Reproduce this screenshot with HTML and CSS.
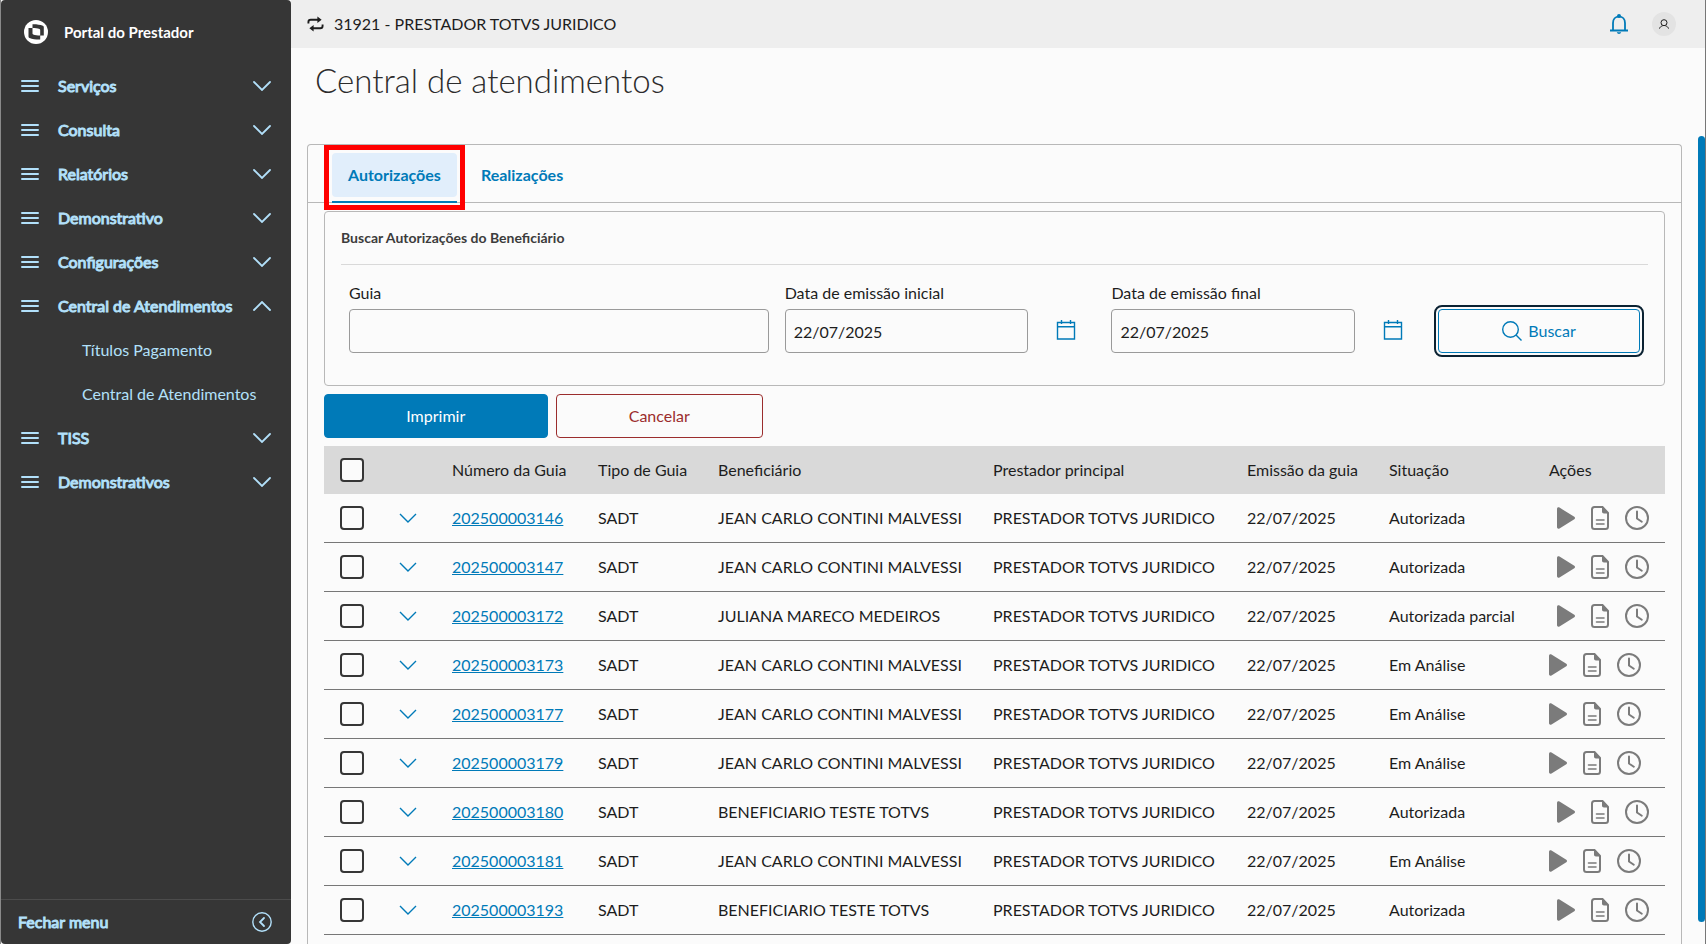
FILE: index.html
```html
<!DOCTYPE html>
<html lang="pt-BR">
<head>
  <meta charset="UTF-8">
  <meta name="viewport" content="width=device-width, initial-scale=1">
  <title>Portal do Prestador</title>
  <link rel="stylesheet" href="styles.css">
</head>
<body>
  <!-- Icons -->
  <svg class="sprite" aria-hidden="true">
    <symbol id="i-menu" viewBox="0 0 18 14"><path d="M1 2h16M1 7h16M1 12h16" fill="none" stroke="currentColor" stroke-width="2" stroke-linecap="round"/></symbol>
    <symbol id="i-down" viewBox="0 0 18 10"><path d="M1 1l8 8 8-8" fill="none" stroke="currentColor" stroke-width="1.8" stroke-linecap="round"/></symbol>
    <symbol id="i-up" viewBox="0 0 18 10"><path d="M1 9l8-8 8 8" fill="none" stroke="currentColor" stroke-width="1.8" stroke-linecap="round"/></symbol>
    <symbol id="i-expand" viewBox="0 0 18 10"><path d="M1 1l8 8 8-8" fill="none" stroke="currentColor" stroke-width="1.4"/></symbol>
    <symbol id="i-calendar" viewBox="0 0 20 20"><path d="M1.5 2.5h17v16.5h-17zM1.5 6.7h17M5.5 0v4M14.5 0v4" fill="none" stroke="currentColor" stroke-width="1.4"/></symbol>
    <symbol id="i-play" viewBox="0 0 18 24"><path d="M0 3c0-1.600 1.300-2.100 2.500-1.400l14.800 9.200c1 .6 1 1.800 0 2.400L2.500 22.400C1.300 23.100 0 22.600 0 21z" fill="currentColor"/></symbol>
    <symbol id="i-file" viewBox="0 0 18 24"><path d="M11.500 1H3.500C2 1 1 2 1 3.500v17C1 22 2 23 3.500 23h11c1.500 0 2.500-1 2.500-2.500V7z" fill="none" stroke="currentColor" stroke-width="2"/><path d="M11 0.500L17.500 7.500H13c-1.300 0-2-.7-2-2z" fill="currentColor"/><path d="M5.500 14h7.500M5.500 18h7.500" stroke="currentColor" stroke-width="1.600" stroke-linecap="round"/></symbol>
    <symbol id="i-clock" viewBox="0 0 24 24"><circle cx="12" cy="12" r="11" fill="none" stroke="currentColor" stroke-width="2"/><path d="M12 5.500V12.500L16.800 15.800" fill="none" stroke="currentColor" stroke-width="2" stroke-linecap="round" stroke-linejoin="round"/></symbol>
  </svg>

  <!-- Sidebar -->
  <aside class="sidebar">
    <div class="brand">
      <svg class="logo" viewBox="0 0 24 24"><circle cx="12" cy="12" r="12" fill="#fff"/><path d="M8.500 4.200c4-.1 7.500.4 10.300 1.500.7.300 1 .8 1 1.500v8.400h-3.600v4c-4 .1-7.600-.4-10.700-1.600-.7-.3-1-.8-1-1.500V8h4z" fill="#363636"/><path d="M8.500 8c2.700 0 5 .3 7 1.100.5.200.7.5.7 1v5.400c-2.700 0-5-.3-7-1.100-.5-.2-.7-.5-.7-1z" fill="#fff"/></svg>
      <span>Portal do Prestador</span>
    </div>
    <nav class="menu">
      <button class="menu-item"><svg class="burger"><use href="#i-menu"/></svg><span>Serviços</span><svg class="chevron"><use href="#i-down"/></svg></button>
      <button class="menu-item"><svg class="burger"><use href="#i-menu"/></svg><span>Consulta</span><svg class="chevron"><use href="#i-down"/></svg></button>
      <button class="menu-item"><svg class="burger"><use href="#i-menu"/></svg><span>Relatórios</span><svg class="chevron"><use href="#i-down"/></svg></button>
      <button class="menu-item"><svg class="burger"><use href="#i-menu"/></svg><span>Demonstrativo</span><svg class="chevron"><use href="#i-down"/></svg></button>
      <button class="menu-item"><svg class="burger"><use href="#i-menu"/></svg><span>Configurações</span><svg class="chevron"><use href="#i-down"/></svg></button>
      <button class="menu-item" aria-expanded="true"><svg class="burger"><use href="#i-menu"/></svg><span>Central de Atendimentos</span><svg class="chevron"><use href="#i-up"/></svg></button>
      <a class="submenu-item" href="#">Títulos Pagamento</a>
      <a class="submenu-item" href="#">Central de Atendimentos</a>
      <button class="menu-item"><svg class="burger"><use href="#i-menu"/></svg><span>TISS</span><svg class="chevron"><use href="#i-down"/></svg></button>
      <button class="menu-item"><svg class="burger"><use href="#i-menu"/></svg><span>Demonstrativos</span><svg class="chevron"><use href="#i-down"/></svg></button>
    </nav>
    <button class="close-menu">
      <span>Fechar menu</span>
      <svg class="close-icon" viewBox="0 0 20 20" fill="none" stroke="currentColor"><circle cx="10" cy="10" r="9.200" stroke-width="1.400"/><path d="M12 6l-4 4 4 4" stroke-width="1.800" stroke-linecap="round"/></svg>
    </button>
  </aside>

  <div class="page">
    <header class="topbar">
      <a class="provider" href="#">
        <svg class="swap" viewBox="0 0 18 16" fill="none" stroke="currentColor" stroke-width="2"><path d="M1.500 7.500V6c0-1.700.8-2.500 2.500-2.500h8M16.500 8.500V10c0 1.700-.8 2.500-2.500 2.500H6"/><path d="M11 0l4.500 3.500L11 7zM7 9l-4.500 3.500L7 16z" fill="currentColor" stroke="none"/></svg>
        <span>31921 - PRESTADOR TOTVS JURIDICO</span>
      </a>
      <div class="topbar-tools">
        <button class="bell" aria-label="Notificações">
          <svg viewBox="0 0 18 20"><path d="M3 16V9c0-3.700 2.300-6.300 6-6.300S15 5.300 15 9v7M0 16.500h18" fill="none" stroke="currentColor" stroke-width="1.800"/><circle cx="9" cy="2" r="2" fill="currentColor"/><path d="M6.800 18.300h4.400c-.4 1.100-1.200 1.700-2.200 1.700s-1.800-.6-2.200-1.700z" fill="currentColor"/></svg>
        </button>
        <button class="avatar" aria-label="Perfil">
          <svg viewBox="0 0 10 10" fill="none" stroke="currentColor"><circle cx="5" cy="3.700" r="3"/><path d="M.5 9.600C.9 8 2 7.300 3.600 6.800M9.500 9.600C9.100 8 8 7.300 6.400 6.800"/></svg>
        </button>
      </div>
    </header>

    <main class="content">
      <h1>Central de atendimentos</h1>

      <section class="box">
        <div class="tabs">
          <div class="highlight"><button class="tab active">Autorizações</button></div>
          <button class="tab">Realizações</button>
        </div>

        <div class="tab-content">
          <form class="search">
            <h2>Buscar Autorizações do Beneficiário</h2>
            <div class="fields">
              <div class="field">
                <label for="guia">Guia</label>
                <input type="text" id="guia">
              </div>
              <div class="field">
                <label for="inicio">Data de emissão inicial</label>
                <div class="date">
                  <input type="text" id="inicio" value="22/07/2025">
                  <button type="button" class="calendar" aria-label="Abrir calendário inicial"><svg><use href="#i-calendar"/></svg></button>
                </div>
              </div>
              <div class="field">
                <label for="fim">Data de emissão final</label>
                <div class="date">
                  <input type="text" id="fim" value="22/07/2025">
                  <button type="button" class="calendar" aria-label="Abrir calendário final"><svg><use href="#i-calendar"/></svg></button>
                </div>
              </div>
              <div class="field">
                <button type="button" class="btn btn-search">
                  <svg viewBox="0 0 20 20" fill="none" stroke="currentColor" stroke-width="1.400"><circle cx="8.500" cy="8.500" r="7.800"/><path d="M14 14l5.500 5.500"/></svg>
                  Buscar
                </button>
              </div>
            </div>
          </form>

          <div class="actions">
            <button class="btn btn-primary">Imprimir</button>
            <button class="btn btn-danger">Cancelar</button>
          </div>

          <table>
            <colgroup>
              <col class="c-check"><col class="c-toggle"><col class="c-number"><col class="c-type"><col class="c-person"><col class="c-provider"><col class="c-date"><col class="c-status"><col class="c-actions">
            </colgroup>
            <thead>
              <tr>
                <th><input type="checkbox" aria-label="Selecionar todas"></th>
                <th></th>
                <th>Número da Guia</th>
                <th>Tipo de Guia</th>
                <th>Beneficiário</th>
                <th>Prestador principal</th>
                <th>Emissão da guia</th>
                <th>Situação</th>
                <th>Ações</th>
              </tr>
            </thead>
            <tbody>
              <tr>
                <td><input type="checkbox" aria-label="Selecionar 202500003146"></td>
                <td><button class="toggle" aria-label="Detalhes"><svg><use href="#i-expand"/></svg></button></td>
                <td><a href="#">202500003146</a></td><td>SADT</td><td>JEAN CARLO CONTINI MALVESSI</td><td>PRESTADOR TOTVS JURIDICO</td><td>22/07/2025</td><td>Autorizada</td>
                <td><div class="icons approved"><button aria-label="Executar"><svg><use href="#i-play"/></svg></button><button aria-label="Documento"><svg><use href="#i-file"/></svg></button><button aria-label="Histórico"><svg class="clock"><use href="#i-clock"/></svg></button></div></td>
              </tr>
              <tr>
                <td><input type="checkbox" aria-label="Selecionar 202500003147"></td>
                <td><button class="toggle" aria-label="Detalhes"><svg><use href="#i-expand"/></svg></button></td>
                <td><a href="#">202500003147</a></td><td>SADT</td><td>JEAN CARLO CONTINI MALVESSI</td><td>PRESTADOR TOTVS JURIDICO</td><td>22/07/2025</td><td>Autorizada</td>
                <td><div class="icons approved"><button aria-label="Executar"><svg><use href="#i-play"/></svg></button><button aria-label="Documento"><svg><use href="#i-file"/></svg></button><button aria-label="Histórico"><svg class="clock"><use href="#i-clock"/></svg></button></div></td>
              </tr>
              <tr>
                <td><input type="checkbox" aria-label="Selecionar 202500003172"></td>
                <td><button class="toggle" aria-label="Detalhes"><svg><use href="#i-expand"/></svg></button></td>
                <td><a href="#">202500003172</a></td><td>SADT</td><td>JULIANA MARECO MEDEIROS</td><td>PRESTADOR TOTVS JURIDICO</td><td>22/07/2025</td><td>Autorizada parcial</td>
                <td><div class="icons approved"><button aria-label="Executar"><svg><use href="#i-play"/></svg></button><button aria-label="Documento"><svg><use href="#i-file"/></svg></button><button aria-label="Histórico"><svg class="clock"><use href="#i-clock"/></svg></button></div></td>
              </tr>
              <tr>
                <td><input type="checkbox" aria-label="Selecionar 202500003173"></td>
                <td><button class="toggle" aria-label="Detalhes"><svg><use href="#i-expand"/></svg></button></td>
                <td><a href="#">202500003173</a></td><td>SADT</td><td>JEAN CARLO CONTINI MALVESSI</td><td>PRESTADOR TOTVS JURIDICO</td><td>22/07/2025</td><td>Em Análise</td>
                <td><div class="icons"><button aria-label="Executar"><svg><use href="#i-play"/></svg></button><button aria-label="Documento"><svg><use href="#i-file"/></svg></button><button aria-label="Histórico"><svg class="clock"><use href="#i-clock"/></svg></button></div></td>
              </tr>
              <tr>
                <td><input type="checkbox" aria-label="Selecionar 202500003177"></td>
                <td><button class="toggle" aria-label="Detalhes"><svg><use href="#i-expand"/></svg></button></td>
                <td><a href="#">202500003177</a></td><td>SADT</td><td>JEAN CARLO CONTINI MALVESSI</td><td>PRESTADOR TOTVS JURIDICO</td><td>22/07/2025</td><td>Em Análise</td>
                <td><div class="icons"><button aria-label="Executar"><svg><use href="#i-play"/></svg></button><button aria-label="Documento"><svg><use href="#i-file"/></svg></button><button aria-label="Histórico"><svg class="clock"><use href="#i-clock"/></svg></button></div></td>
              </tr>
              <tr>
                <td><input type="checkbox" aria-label="Selecionar 202500003179"></td>
                <td><button class="toggle" aria-label="Detalhes"><svg><use href="#i-expand"/></svg></button></td>
                <td><a href="#">202500003179</a></td><td>SADT</td><td>JEAN CARLO CONTINI MALVESSI</td><td>PRESTADOR TOTVS JURIDICO</td><td>22/07/2025</td><td>Em Análise</td>
                <td><div class="icons"><button aria-label="Executar"><svg><use href="#i-play"/></svg></button><button aria-label="Documento"><svg><use href="#i-file"/></svg></button><button aria-label="Histórico"><svg class="clock"><use href="#i-clock"/></svg></button></div></td>
              </tr>
              <tr>
                <td><input type="checkbox" aria-label="Selecionar 202500003180"></td>
                <td><button class="toggle" aria-label="Detalhes"><svg><use href="#i-expand"/></svg></button></td>
                <td><a href="#">202500003180</a></td><td>SADT</td><td>BENEFICIARIO TESTE TOTVS</td><td>PRESTADOR TOTVS JURIDICO</td><td>22/07/2025</td><td>Autorizada</td>
                <td><div class="icons approved"><button aria-label="Executar"><svg><use href="#i-play"/></svg></button><button aria-label="Documento"><svg><use href="#i-file"/></svg></button><button aria-label="Histórico"><svg class="clock"><use href="#i-clock"/></svg></button></div></td>
              </tr>
              <tr>
                <td><input type="checkbox" aria-label="Selecionar 202500003181"></td>
                <td><button class="toggle" aria-label="Detalhes"><svg><use href="#i-expand"/></svg></button></td>
                <td><a href="#">202500003181</a></td><td>SADT</td><td>JEAN CARLO CONTINI MALVESSI</td><td>PRESTADOR TOTVS JURIDICO</td><td>22/07/2025</td><td>Em Análise</td>
                <td><div class="icons"><button aria-label="Executar"><svg><use href="#i-play"/></svg></button><button aria-label="Documento"><svg><use href="#i-file"/></svg></button><button aria-label="Histórico"><svg class="clock"><use href="#i-clock"/></svg></button></div></td>
              </tr>
              <tr>
                <td><input type="checkbox" aria-label="Selecionar 202500003193"></td>
                <td><button class="toggle" aria-label="Detalhes"><svg><use href="#i-expand"/></svg></button></td>
                <td><a href="#">202500003193</a></td><td>SADT</td><td>BENEFICIARIO TESTE TOTVS</td><td>PRESTADOR TOTVS JURIDICO</td><td>22/07/2025</td><td>Autorizada</td>
                <td><div class="icons approved"><button aria-label="Executar"><svg><use href="#i-play"/></svg></button><button aria-label="Documento"><svg><use href="#i-file"/></svg></button><button aria-label="Histórico"><svg class="clock"><use href="#i-clock"/></svg></button></div></td>
              </tr>
            </tbody>
          </table>
        </div>
      </section>
    </main>
    <div class="scroll-thumb"></div>
  </div>
</body>
</html>
```
FILE: styles.css
```css
* {
  margin: 0;
  padding: 0;
  box-sizing: border-box;
}
body {
  display: flex;
  min-height: 100vh;
  font-family: Lato, "Liberation Sans", sans-serif;
  font-size: 16px;
  line-height: 24px;
  color: #1d1d1d;
  background: #fbfbfb;
  border-left: 1px solid #8a8a8a;
  border-right: 1px solid #777;
}
button, input {
  font: inherit;
  color: inherit;
  background: none;
  border: none;
}
button {
  cursor: pointer;
}
a {
  color: #007ab8;
}
svg {
  display: block;
  flex-shrink: 0;
}
.sprite {
  position: absolute;
  width: 0;
  height: 0;
}

/* Sidebar */
.sidebar {
  display: flex;
  flex-direction: column;
  flex-shrink: 0;
  width: 290px;
  color: #b2e0fa;
  background: #363636;
  border-radius: 4px;
}
.brand {
  display: flex;
  align-items: center;
  gap: 16px;
  height: 64px;
  padding-left: 23px;
  color: #fff;
  font-size: 15px;
  font-weight: bold;
}
.logo {
  width: 24px;
  height: 24px;
}
.menu {
  flex: 1;
}
.menu-item, .close-menu {
  display: flex;
  align-items: center;
  width: 100%;
  height: 44px;
  text-align: left;
  -webkit-text-stroke: 1px currentColor;
}
.menu-item {
  gap: 19px;
  padding: 0 20px;
}
.menu-item span, .close-menu span {
  flex: 1;
}
.burger {
  width: 18px;
  height: 14px;
}
.chevron {
  width: 18px;
  height: 10px;
}
.submenu-item {
  display: flex;
  align-items: center;
  height: 44px;
  padding-left: 81px;
  color: #b2e0fa;
  text-decoration: none;
}
.close-menu {
  height: 45px;
  padding: 0 19px 0 17px;
  border-top: 1px solid #4c4c4c;
}
.close-icon {
  width: 20px;
  height: 20px;
}

/* Top bar */
.page {
  display: flex;
  flex-direction: column;
  flex: 1;
  min-width: 0;
}
.topbar {
  display: flex;
  justify-content: space-between;
  align-items: center;
  height: 48px;
  padding: 0 29px 0 16px;
  background: #eee;
}
.provider {
  display: flex;
  align-items: center;
  gap: 10px;
  color: #1d1d1d;
  text-decoration: none;
}
.swap {
  width: 17px;
  height: 16px;
}
.topbar-tools {
  display: flex;
  align-items: center;
  gap: 24px;
}
.bell {
  color: #007ab8;
}
.bell svg {
  width: 18px;
  height: 20px;
}
.avatar {
  display: flex;
  align-items: center;
  justify-content: center;
  width: 24px;
  height: 24px;
  border-radius: 50%;
  background: #e3e3e3;
}
.avatar svg {
  width: 10px;
  height: 10px;
}

/* Content */
.content {
  display: flex;
  flex-direction: column;
  flex: 1;
  padding: 8px 23px 0 16px;
}
h1 {
  margin-bottom: 40px;
  padding-left: 8px;
  font-size: 33px;
  font-weight: 300;
  line-height: 48px;
  color: #2c2c2c;
}
.box {
  flex: 1;
  border: 1px solid #b8b8b8;
  border-bottom: none;
  border-radius: 4px 4px 0 0;
}
.tabs {
  display: flex;
  align-items: flex-start;
  height: 58px;
  padding-left: 16px;
  border-bottom: 1px solid #b8b8b8;
}
.highlight {
  padding: 3px;
  border: 5px solid #f00;
  height: 65px;
}
.tab {
  height: 44px;
  padding: 0 16px;
  font-weight: bold;
  color: #007ab8;
  border-radius: 4px;
}
.tab.active {
  display: block;
  position: relative;
  background: #e1eefb;
}
/* active tab marker over the divider */
.tab.active::after {
  content: "";
  position: absolute;
  left: 0;
  right: 0;
  bottom: -6px;
  height: 2px;
  background: #007ab8;
}
.tabs > .tab {
  margin-top: 8px;
}
.tab-content {
  padding: 8px 16px;
}

/* Search form */
.search {
  height: 175px;
  padding: 0 16px;
  border: 1px solid #b8b8b8;
  border-radius: 4px;
}
.search h2 {
  height: 53px;
  font-size: 14px;
  line-height: 52px;
  color: #3c3c3c;
  border-bottom: 1px solid #d9d9d9;
}
.fields {
  display: grid;
  grid-template-columns: 4fr 3fr 3fr 2fr;
  padding-top: 16px;
}
.field {
  display: flex;
  flex-direction: column;
  justify-content: flex-end;
  gap: 4px;
  padding: 0 8px;
}
.field input {
  width: 100%;
  min-width: 0;
  height: 44px;
  padding: 0 8px;
  border: 1px solid #9a9a9a;
  border-radius: 4px;
}
.date {
  display: flex;
  align-items: center;
  gap: 16px;
}
.calendar {
  padding: 0 19px 2px 12px;
  color: #007ab8;
}
.calendar svg {
  width: 20px;
  height: 20px;
}

.btn {
  height: 44px;
  border: 1px solid;
  border-radius: 4px;
}
.btn-search {
  display: flex;
  align-items: center;
  justify-content: center;
  gap: 6px;
  color: #007ab8;
  outline: 2px solid #0b2232;
  outline-offset: 2px;
}
.btn-search svg {
  width: 20px;
  height: 20px;
}
.actions {
  display: flex;
  gap: 8px;
  padding: 8px 0;
}
.btn-primary {
  width: calc(100% / 6);
  color: #fff;
  background: #007ab8;
  border-color: #007ab8;
}
.btn-danger {
  width: calc(100% / 6 - 16px);
  color: #9b2d2d;
}

/* Table */
table {
  width: 100%;
  table-layout: fixed;
  border-collapse: separate;
  border-spacing: 0;
}
.c-check, .c-toggle { width: 56px; }
.c-number { width: 146px; }
.c-type { width: 120px; }
.c-person { width: 275px; }
.c-provider { width: 254px; }
.c-date { width: 142px; }
.c-status { width: 160px; }
.c-actions { width: 132px; }
th, td {
  padding: 0 16px;
  text-align: left;
  white-space: nowrap;
}
th {
  height: 48px;
  font-weight: normal;
  background: #d9d9d9;
}
td {
  height: 49px;
  border-bottom: 1px solid #777;
}
input[type="checkbox"] {
  display: block;
  appearance: none;
  width: 24px;
  height: 24px;
  border: 2px solid #363636;
  border-radius: 4px;
  background: #fbfbfb;
}
.toggle {
  display: block;
  padding-left: 3px;
  color: #007ab8;
}
.toggle svg {
  width: 18px;
  height: 10px;
}
.icons {
  display: flex;
  gap: 16px;
  color: #7b7b7b;
}
.icons.approved {
  padding-left: 8px;
}
.icons svg {
  width: 18px;
  height: 24px;
}
.icons .clock {
  width: 24px;
}

/* Page scrollbar */
.scroll-thumb {
  position: fixed;
  top: 136px;
  right: 1px;
  bottom: 22px;
  width: 7px;
  border-radius: 4px;
  background: #007ab8;
}
```
